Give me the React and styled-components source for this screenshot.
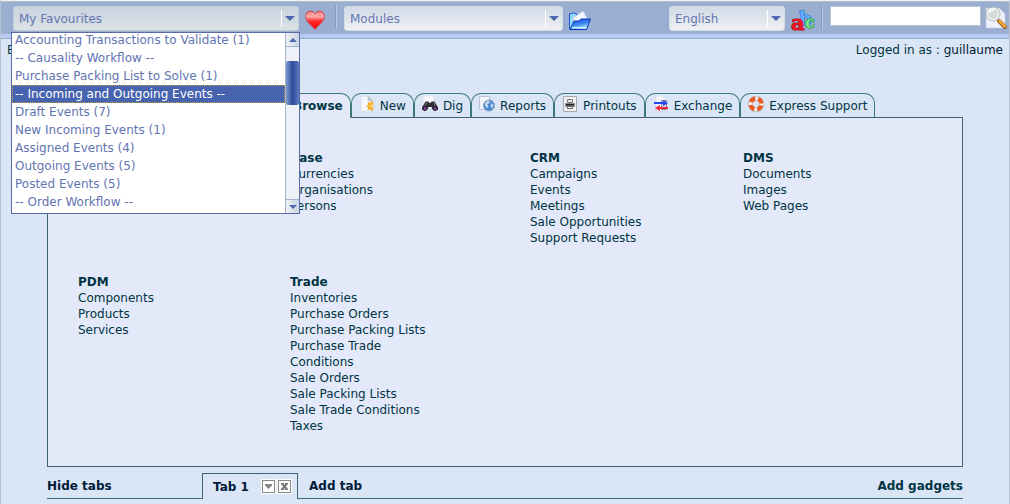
import React, { useState } from 'react';
import styled, { createGlobalStyle } from 'styled-components';

const FAVOURITES = [
  'Accounting Transactions to Validate (1)',
  '-- Causality Workflow --',
  'Purchase Packing List to Solve (1)',
  '-- Incoming and Outgoing Events --',
  'Draft Events (7)',
  'New Incoming Events (1)',
  'Assigned Events (4)',
  'Outgoing Events (5)',
  'Posted Events (5)',
  '-- Order Workflow --',
];

const TABS = [
  { label: 'New', Icon: NewIcon },
  { label: 'Dig', Icon: DigIcon },
  { label: 'Reports', Icon: ReportsIcon },
  { label: 'Printouts', Icon: PrintIcon },
  { label: 'Exchange', Icon: ExchangeIcon },
  { label: 'Express Support', Icon: SupportIcon },
];

const MODULES = [
  { title: '', items: [] },
  { title: 'Base', items: ['Currencies', 'Organisations', 'Persons'] },
  {
    title: 'CRM',
    items: ['Campaigns', 'Events', 'Meetings', 'Sale Opportunities', 'Support Requests'],
  },
  { title: 'DMS', items: ['Documents', 'Images', 'Web Pages'] },
  { title: 'PDM', items: ['Components', 'Products', 'Services'] },
  {
    title: 'Trade',
    items: [
      'Inventories',
      'Purchase Orders',
      'Purchase Packing Lists',
      'Purchase Trade',
      'Conditions',
      'Sale Orders',
      'Sale Packing Lists',
      'Sale Trade Conditions',
      'Taxes',
    ],
  },
];

export default function App() {
  const [selected, setSelected] = useState(3);

  return (
    <>
      <GlobalStyle />
      <Page>
        <Toolbar>
          <FavouritesBox>
            <SelectBox label="Favourites" options={['My Favourites']} $width={286} $open />
            <DropList role="listbox" aria-label="My Favourites">
              <Options>
                {FAVOURITES.map((name, index) => (
                  <Option
                    key={name}
                    role="option"
                    aria-selected={index === selected}
                    $selected={index === selected}
                    onClick={() => setSelected(index)}
                  >
                    {name}
                  </Option>
                ))}
              </Options>
              <ScrollBar>
                <ScrollButton type="button" aria-label="Scroll up" tabIndex={-1}>
                  <Arrow $up $small />
                </ScrollButton>
                <ScrollTrack>
                  <ScrollThumb />
                </ScrollTrack>
                <ScrollButton type="button" aria-label="Scroll down" tabIndex={-1} $bottom>
                  <Arrow $small />
                </ScrollButton>
              </ScrollBar>
            </DropList>
          </FavouritesBox>
          <ToolButton type="button" aria-label="Add to favourites">
            <HeartIcon />
          </ToolButton>
          <Separator />
          <SelectBox label="Modules" options={['Modules']} $width={219} />
          <ToolButton type="button" aria-label="Open module">
            <FolderIcon />
          </ToolButton>
          <Spacer />
          <SelectBox label="Language" options={['English']} $width={116} />
          <ToolButton type="button" aria-label="Change language">
            <LettersIcon />
          </ToolButton>
          <Separator />
          <SearchInput type="text" aria-label="Search" />
          <SearchButton type="button" aria-label="Search">
            <SearchIcon />
          </SearchButton>
        </Toolbar>

        <StatusRow>
          <span>E</span>
          <span>
            Logged in as : <UserName>guillaume</UserName>
          </span>
        </StatusRow>

        <Content>
          <TabBar>
            <Tab href="#browse" $active>
              <NewIcon />
              Browse
            </Tab>
            {TABS.map(({ label, Icon }) => (
              <Tab key={label} href={`#${label.toLowerCase()}`}>
                <Icon />
                {label}
              </Tab>
            ))}
          </TabBar>
          <Panel>
            {MODULES.map(({ title, items }) => (
              <Group key={title}>
                {title && <GroupTitle>{title}</GroupTitle>}
                {items.map((item) => (
                  <a key={item} href="#module">
                    {item}
                  </a>
                ))}
              </Group>
            ))}
          </Panel>

          <PageTabs>
            <HideCell>
              <TextLink href="#hide">Hide tabs</TextLink>
            </HideCell>
            <PageTab>
              <TextLink href="#tab1">Tab 1</TextLink>
              <PageTabButtons>
                <MiniButton type="button" aria-label="Tab menu">
                  <svg width="9" height="9" viewBox="0 0 9 9">
                    <path d="M1 2h7v2h-1v1h-1v1h-1v1h-1v-1h-1v-1h-1v-1h-1z" fill="#888" />
                  </svg>
                </MiniButton>
                <MiniButton type="button" aria-label="Close tab">
                  <svg width="9" height="9" viewBox="0 0 9 9">
                    <path d="M2 1.500l5 6M7 1.500l-5 6" stroke="#777" strokeWidth="2" />
                    <path d="M1 1.500h3M5 1.500h3M1 7.500h3M5 7.500h3" stroke="#777" />
                  </svg>
                </MiniButton>
              </PageTabButtons>
            </PageTab>
            <RestCell>
              <TextLink href="#add">Add tab</TextLink>
              <TextLink href="#gadgets" $teal>
                Add gadgets
              </TextLink>
            </RestCell>
          </PageTabs>
        </Content>
      </Page>
    </>
  );
}

function SelectBox({ label, options, $width, $open }) {
  return (
    <SelectFrame $width={$width} $open={$open}>
      <Select aria-label={label}>
        {options.map((option) => (
          <option key={option}>{option}</option>
        ))}
      </Select>
      <SelectArrow>
        <Arrow />
      </SelectArrow>
    </SelectFrame>
  );
}

function HeartIcon() {
  return (
    <svg width="22" height="22" viewBox="0 0 22 22">
      <defs>
        <linearGradient id="heart" x1="0" y1="0" x2="0" y2="1">
          <stop offset="0" stopColor="#ff4a4a" />
          <stop offset="0.3" stopColor="#ffa9a9" />
          <stop offset="0.55" stopColor="#ff2a2a" />
          <stop offset="1" stopColor="#f00000" />
        </linearGradient>
      </defs>
      <path
        d="M11 20.500C8.500 17 1.500 13 1.500 7.500C1.500 4 4 2 6.500 2C8.700 2 10.300 3.300 11 5C11.700 3.300 13.300 2 15.500 2C18 2 20.500 4 20.500 7.500C20.500 13 13.500 17 11 20.500Z"
        fill="url(#heart)"
        stroke="#c25b6c"
      />
      <path d="M4 7Q5 4 7.500 4T10 7M12.500 7Q13 4 15.500 4T18.500 7" fill="none" stroke="#ffc4c4" />
    </svg>
  );
}

function FolderIcon() {
  return (
    <svg width="24" height="22" viewBox="0 0 24 22">
      <defs>
        <linearGradient id="folder" x1="0" y1="0" x2="0.4" y2="1">
          <stop offset="0" stopColor="#1a46d8" />
          <stop offset="0.6" stopColor="#3c8bf2" />
          <stop offset="1" stopColor="#b9ecff" />
        </linearGradient>
      </defs>
      <path d="M1.500 5l4-1l3 1v3l-5 12H1.500z" fill="#8fdcf8" stroke="#1b55d0" />
      <path d="M5 9l10-7l5 9l-13 5z" fill="#f5f7ff" stroke="#c3cdf0" />
      <path d="M2 20.500l4-8.500h5l2-2h9.500l-4 10.500z" fill="url(#folder)" stroke="#0d35b8" />
      <path d="M4 18.500h14" stroke="#c5f3ff" />
    </svg>
  );
}

function LettersIcon() {
  return (
    <LettersSvg width="24" height="24" viewBox="0 0 24 24">
      <text x="9" y="17" fontSize="18" fill="#5fb0ff" stroke="#1460c4">
        b
      </text>
      <text x="1" y="22" fontSize="21" fill="#f01822" stroke="#a80818">
        a
      </text>
      <text x="15" y="20" fontSize="16" fill="#7be486" stroke="#0b8a2e">
        c
      </text>
    </LettersSvg>
  );
}

function SearchIcon() {
  return (
    <svg width="24" height="24" viewBox="0 0 24 24">
      <path d="M2 2h13l6 6v14H2z" fill="#eff1fa" stroke="#c6cee0" strokeWidth="0.500" />
      <path d="M15 15l6 6" stroke="#8a5a1c" strokeWidth="4" strokeLinecap="round" />
      <path d="M15.500 15l5.500 5.500" stroke="#f5a93a" strokeWidth="2.500" strokeLinecap="round" />
      <circle cx="9" cy="8" r="6" fill="#d5dcda" stroke="#f3f3f0" strokeWidth="2" />
      <circle cx="9" cy="8" r="7" fill="none" stroke="#a4abad" strokeWidth="0.800" />
      <path d="M5 7q1-4 5-3" fill="none" stroke="#fff" strokeWidth="1.500" />
    </svg>
  );
}

function NewIcon() {
  return (
    <svg width="16" height="16" viewBox="0 0 16 16">
      <path d="M2 .5h7l4 4v10.500H2z" fill="#f6f7fc" stroke="#d3d8e6" strokeWidth="0.600" />
      <path d="M9 .5v4h4z" fill="#b9bfcc" stroke="#a9afbd" strokeWidth="0.500" />
      <path
        d="M13 5l-1.500 2l-2.500-.5l.5 2l-2 1.500l2 1.500l-.5 2l2.500-.5l1.500 2l.8-2.500v-5z"
        fill="#f6b731"
        stroke="#e59a25"
        strokeWidth="0.600"
      />
      <path d="M13.500 8l-2 2l2 2z" fill="#fff0a8" />
    </svg>
  );
}

function DigIcon() {
  return (
    <svg width="16" height="16" viewBox="0 0 16 16">
      <path d="M1 0h11v12H1z" fill="#f6f7fb" stroke="#d3d8e4" strokeWidth="0.500" />
      <path
        d="M3.500 5.500h3l1 1.500h1l1-1.500h3l3.500 6v2.500h-5l-1.500-3h-3l-1.500 3h-5v-2.500z"
        fill="#2d2a31"
      />
      <circle cx="3" cy="12.500" r="2" fill="#84409c" stroke="#1c181f" />
      <circle cx="13" cy="12.500" r="2" fill="#84409c" stroke="#1c181f" />
      <path d="M5 6.500l-2 3M12 6.500l1 3" stroke="#888" />
    </svg>
  );
}

function ReportsIcon() {
  return (
    <svg width="16" height="16" viewBox="0 0 16 16">
      <path d="M.5.5h10v13H.5z" fill="#f4f5fb" stroke="#bcc3d2" />
      <circle cx="10" cy="9.500" r="5.500" fill="#4d86cf" stroke="#8298bd" strokeWidth="0.800" />
      <path
        d="M6 7l3-2.500l2 1l-1 2l-2 .5l1.500 2l-1.500 2.500l-2-3zM12.500 7l2 2l-1.500 3.500l-1.500-2.500z"
        fill="#c3ddf5"
      />
    </svg>
  );
}

function PrintIcon() {
  return (
    <svg width="16" height="16" viewBox="0 0 16 16">
      <path d="M1.500.5h13v15h-13z" fill="#f3f3f3" stroke="#a3a9b0" />
      <path d="M5.500 3.500h5v3h-5z" fill="#e6e6e6" stroke="#777" />
      <path d="M3 7h10v4H3z" fill="#8c8c8c" />
      <path d="M4 8h8v1.500H4z" fill="#222" />
      <path d="M5.500 10.500h5v2h-5z" fill="#fff" stroke="#666" />
    </svg>
  );
}

function ExchangeIcon() {
  return (
    <svg width="16" height="16" viewBox="0 0 16 16">
      <path d="M3 0h7l3 3v12H3z" fill="#f5f6fc" stroke="#c8cedc" strokeWidth="0.600" />
      <path d="M8.500 4.500h5v9h-5z" fill="#d5d8df" stroke="#80869a" />
      <path d="M1 6h9V4l5 3l-5 3V8H1z" fill="#2447f5" />
      <path d="M15 11H7V9l-5 3l5 3v-2h8z" fill="#f5263d" />
    </svg>
  );
}

function SupportIcon() {
  return (
    <svg width="16" height="16" viewBox="0 0 16 16">
      <circle cx="8" cy="8" r="5.500" fill="none" stroke="#a8a29c" strokeWidth="5" />
      <circle cx="8" cy="8" r="5.500" fill="none" stroke="#f4f2ef" strokeWidth="4" />
      <circle
        cx="8"
        cy="8"
        r="5.500"
        fill="none"
        stroke="#ec5a22"
        strokeWidth="4"
        strokeDasharray="5.640 3"
        strokeDashoffset="-1.500"
      />
    </svg>
  );
}

const GlobalStyle = createGlobalStyle`
  * {
    box-sizing: border-box;
  }

  body {
    margin: 0;
    background: #dae5f5;
    color: #003444;
    font-family: 'DejaVu Sans', sans-serif;
    font-size: 12px;
    line-height: 16px;
  }

  a {
    color: inherit;
    text-decoration: none;
  }

  button {
    padding: 0;
    border: 0;
    background: none;
  }

  svg {
    display: block;
    flex: none;
  }
`;

const Page = styled.div`
  min-height: 100vh;
  border: 1px solid #b4c2d2;
  border-top-color: #f0f2f4;
  border-bottom: 0;
`;

const Toolbar = styled.header`
  display: flex;
  align-items: flex-start;
  height: 38px;
  padding: 4px 1px 0 12px;
  background: linear-gradient(#99aed1 32px, #b9cbf0 32px);
  border-top: 1px solid #b0bfcc;
  border-bottom: 1px solid #92aad0;
`;

const FavouritesBox = styled.div`
  position: relative;
`;

const SelectFrame = styled.div`
  display: grid;
  grid-template-columns: 1fr 17px;
  width: ${({ $width }) => $width}px;
  height: 25px;
  border: 1px solid ${({ $open }) => ($open ? '#c3ced8' : '#d3dae2')};
  border-radius: 3px;
  background: ${({ $open }) =>
    $open ? 'linear-gradient(#c8d3df, #dae2e6)' : 'linear-gradient(#d0dae7, #eff1f2)'};
`;

const Select = styled.select`
  appearance: none;
  grid-area: 1 / 1 / 2 / 3;
  min-width: 0;
  padding: 0 20px 0 5px;
  border: 0;
  background: none;
  color: #6676b2;
  font: inherit;
`;

const SelectArrow = styled.span`
  grid-area: 1 / 2;
  display: flex;
  align-items: center;
  justify-content: center;
  margin: 3px 0;
  border-left: 1px solid #fff;
  pointer-events: none;
`;

const Arrow = styled.span`
  width: 0;
  border: solid transparent;
  border-width: ${({ $small }) => ($small ? '0 4px' : '0 5px')};
  ${({ $up, $small }) =>
    `border-${$up ? 'bottom' : 'top'}: ${$small ? 4 : 5}px solid #4e66ae;`}
`;

const DropList = styled.div`
  position: absolute;
  top: 26px;
  left: -2px;
  z-index: 1;
  display: flex;
  width: 289px;
  height: 182px;
  border: 1px solid #5a6ca8;
  background: #fff;
`;

const Options = styled.div`
  flex: 1;
  display: flex;
  flex-direction: column;
  justify-content: flex-end;
  padding-bottom: 2px;
  overflow: hidden;
`;

const Option = styled.div`
  flex: none;
  height: 18px;
  padding: 0 2px;
  border: 1px ${({ $selected }) => ($selected ? 'dotted #c9a13c' : 'solid transparent')};
  background: ${({ $selected }) => ($selected ? '#4762ae' : 'none')};
  color: ${({ $selected }) => ($selected ? '#fff' : '#6274b2')};
  white-space: nowrap;
`;

const ScrollBar = styled.div`
  display: flex;
  flex-direction: column;
  width: 14px;
  border-left: 1px solid #a3b1cc;
  background: #eef1f7;
`;

const ScrollButton = styled.button`
  display: flex;
  align-items: center;
  justify-content: center;
  height: 14px;
  background: linear-gradient(90deg, #eef1f5, #cbd5e6);
  border: solid #a3b1cc;
  border-width: ${({ $bottom }) => ($bottom ? '1px 0 0' : '0 0 1px')};
`;

const ScrollTrack = styled.div`
  flex: 1;
  padding-top: 14px;
`;

const ScrollThumb = styled.div`
  height: 44px;
  border-radius: 2px;
  background: linear-gradient(90deg, #7f9ad0, #2d4c9c 50%, #5c7abf);
`;

const ToolButton = styled.button`
  width: 24px;
  height: 24px;
  margin: 2px 0 0 5px;
`;

const SearchButton = styled.button`
  width: 24px;
  height: 24px;
  margin-left: 3px;
`;

const LettersSvg = styled.svg`
  overflow: visible;
  font-family: 'DejaVu Serif', serif;
  font-weight: 700;
  paint-order: stroke;
  stroke-width: 1px;
  stroke-linejoin: round;
`;

const Separator = styled.span`
  width: 2px;
  height: 24px;
  margin: -1px 7px 0;
  border-left: 1px solid #7f9cba;
  border-right: 1px solid #b9cbe0;
`;

const Spacer = styled.span`
  flex: 1;
`;

const SearchInput = styled.input`
  width: 151px;
  height: 20px;
  padding: 0 3px;
  border: 1px solid #b5c3d3;
  background: #fff;
  font: inherit;
`;

const StatusRow = styled.div`
  display: flex;
  justify-content: space-between;
  padding: 3px 6px 0;
`;

const UserName = styled.span`
  color: #001a38;
`;

const Content = styled.main`
  padding: 35px 46px 0;
`;

const TabBar = styled.nav`
  display: flex;
  padding-left: 217px;
`;

const Tab = styled.a`
  display: flex;
  align-items: center;
  gap: 5px;
  height: 25px;
  margin-bottom: -1px;
  padding: 0 7px;
  border: 1px solid #3f7a74;
  border-bottom: ${({ $active }) => ($active ? '1px solid #e3e9f9' : '1px solid #3b6478')};
  border-radius: 10px 10px 0 0;
  background: ${({ $active }) => ($active ? '#e3e9f9' : 'none')};
  font-weight: ${({ $active }) => ($active ? 700 : 400)};
  white-space: nowrap;

  svg {
    margin-bottom: 3px;
  }
`;

const Panel = styled.section`
  display: grid;
  grid-template-columns: 212fr 240fr 213fr 219fr;
  row-gap: 28px;
  padding: 32px 0 32px 30px;
  border: 1px solid #3b6478;
  background: #e3e9f9;
`;

const Group = styled.div`
  display: flex;
  flex-direction: column;
  align-items: flex-start;
`;

const GroupTitle = styled.h2`
  margin: 0;
  font-size: 12px;
  line-height: 16px;
`;

const PageTabs = styled.nav`
  display: flex;
  height: 26px;
  margin-top: 6px;
`;

const HideCell = styled.div`
  width: 155px;
  padding-top: 5px;
  border-bottom: 1px solid #3b6e80;
`;

const PageTab = styled.div`
  display: flex;
  align-items: center;
  justify-content: space-between;
  width: 96px;
  padding: 0 5px 0 10px;
  border: 1px solid #3b6478;
  border-bottom: 0;
`;

const PageTabButtons = styled.span`
  display: flex;
  gap: 1px;
`;

const MiniButton = styled.button`
  display: flex;
  align-items: center;
  justify-content: center;
  width: 15px;
  height: 15px;
  border: 1px solid #fff;
  background: #fff;
  box-shadow: inset 0 0 0 1px #888;
`;

const RestCell = styled.div`
  flex: 1;
  display: flex;
  justify-content: space-between;
  padding: 5px 0 0 11px;
  border-bottom: 1px solid #3b6e80;
`;

const TextLink = styled.a`
  color: ${({ $teal }) => ($teal ? '#003444' : '#001a38')};
  font-weight: 700;
`;
